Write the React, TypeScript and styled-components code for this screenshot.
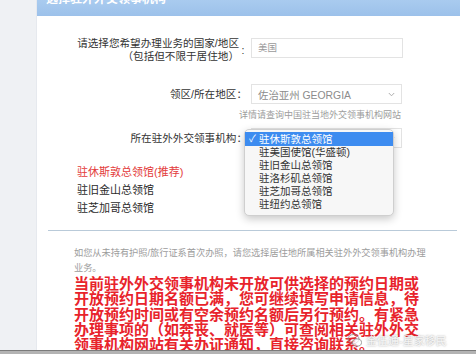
import styled, { createGlobalStyle } from "styled-components";

const GlobalStyle = createGlobalStyle`
  html, body {
    margin: 0;
    padding: 0;
    background: #ffffff;
  }
  body {
    font-family: "Liberation Sans", "Noto Sans CJK SC", sans-serif;
    color: #333333;
  }
`;

const Page = styled.div`
  width: 476px;
  height: 354px;
  overflow: hidden;
  display: flex;
  flex-direction: column;
  position: relative;
`;

const Main = styled.div`
  display: flex;
  height: 350px;
  overflow: hidden;
`;

const Sidebar = styled.div`
  width: 36px;
  flex-shrink: 0;
  background: #eff1f4;
`;

const Panel = styled.div`
  width: 424px;
  flex-shrink: 0;
  background: #ffffff;
  border-left: 1px solid #e6e9ee;
  box-sizing: border-box;
`;

const PanelHeader = styled.div`
  height: 16px;
  background: linear-gradient(#a9cbef, #9cc1ea);
  overflow: hidden;
  padding-left: 9px;
`;

const PanelTitle = styled.div`
  margin-top: -9px;
  line-height: 16px;
  font-size: 12px;
  font-weight: bold;
  color: #ffffff;
`;

const Form = styled.div`
  padding-top: 21px;
`;

const FormRow = styled.div<{ $top?: number }>`
  display: grid;
  grid-template-columns: 210px 152px;
  column-gap: 4px;
  margin-top: ${(p) => p.$top ?? 0}px;
  align-items: ${(p) => (p.$top ? "center" : "start")};
`;

const LabelCell = styled.div`
  display: flex;
  justify-content: flex-end;
  align-items: center;
  font-size: 10.6px;
  line-height: 13px;
  color: #333333;
  text-align: right;
`;

const LabelLines = styled.div`
  text-align: right;
`;

const Colon = styled.span`
  width: 8px;
  text-align: center;
`;

const FieldCell = styled.div`
  position: relative;
`;

const TextInput = styled.div`
  height: 20px;
  margin-top: 1px;
  box-sizing: border-box;
  border: 1px solid #e3e3e3;
  padding-left: 6px;
  font-size: 9.5px;
  line-height: 18px;
  color: #9a9a9a;
`;

const SelectBox = styled.div<{ $width?: number }>`
  width: ${(p) => p.$width ?? 151}px;
  height: 20px;
  box-sizing: border-box;
  border: 1px solid #e3e3e3;
  padding: 0 6px;
  display: flex;
  align-items: center;
  justify-content: space-between;
  font-size: 10.4px;
  color: #8c8c8c;
`;

const Chevron = () => (
  <svg width="7" height="5" viewBox="0 0 7 5">
    <path d="M0.8 1 L3.5 3.8 L6.2 1" fill="none" stroke="#a5a5a5" strokeWidth="0.9" />
  </svg>
);

const Hint = styled.div`
  width: 364px;
  margin-top: 5px;
  text-align: right;
  font-size: 9px;
  line-height: 12px;
  color: #9d9d9d;
`;

const Menu = styled.div`
  position: absolute;
  left: -7px;
  top: 1px;
  width: 150px;
  height: 87px;
  box-sizing: border-box;
  padding-top: 2px;
  background: #f7f7f7;
  border: 1px solid #cfcfcf;
  border-radius: 5px;
  box-shadow: 0 3px 9px rgba(0, 0, 0, 0.22);
  z-index: 2;
`;

const MenuItem = styled.div<{ $active?: boolean }>`
  position: relative;
  height: ${(p) => (p.$active ? 14 : 13)}px;
  line-height: ${(p) => (p.$active ? 14 : 13)}px;
  padding-left: 14px;
  font-size: 10.5px;
  background: ${(p) => (p.$active ? "#3d8cf0" : "transparent")};
  color: ${(p) => (p.$active ? "#ffffff" : "#333333")};
`;

const Check = styled.span`
  position: absolute;
  left: 4px;
  top: 0;
  font-size: 10px;
`;

const OfficeList = styled.div`
  margin-top: 15px;
  padding-left: 40px;
`;

const OfficeItem = styled.div<{ $recommended?: boolean }>`
  font-size: 11px;
  line-height: 18px;
  color: ${(p) => (p.$recommended ? "#e33b3b" : "#2b2b2b")};
`;

const Divider = styled.div`
  margin: 13px 3px 0 11px;
  height: 1px;
  background: #b9cad9;
`;

const Note = styled.div`
  margin-top: 15px;
  padding-left: 37px;
  width: 358px;
  font-size: 9.2px;
  line-height: 15px;
  color: #9c9c9c;
`;

const Warning = styled.div`
  padding-left: 37px;
  width: 352px;
  font-size: 15px;
  line-height: 15.3px;
  font-weight: bold;
  color: #e8232b;
`;

const BottomBar = styled.div`
  height: 4px;
  border-top: 1px solid #7b7b7b;
  background: #b3b3b3;
  box-sizing: border-box;
`;

const Watermark = styled.div`
  position: absolute;
  left: 347px;
  top: 332px;
  display: flex;
  align-items: center;
  gap: 3px;
  font-size: 11px;
  color: rgba(255, 255, 255, 0.85);
  text-shadow: 0 0 2px rgba(90, 90, 90, 0.6);
  z-index: 3;
`;

const WatermarkIcon = () => (
  <svg width="16" height="15" viewBox="0 0 16 15">
    <ellipse cx="6.5" cy="6" rx="5.5" ry="4.5" fill="none" stroke="rgba(140,140,140,0.8)" strokeWidth="1" />
    <ellipse cx="10" cy="9.5" rx="4.5" ry="3.6" fill="rgba(255,255,255,0.7)" stroke="rgba(140,140,140,0.8)" strokeWidth="1" />
  </svg>
);

const offices = ["驻美国使馆(华盛顿)", "驻旧金山总领馆", "驻洛杉矶总领馆", "驻芝加哥总领馆", "驻纽约总领馆"];

export default function App() {
  return (
    <Page>
      <GlobalStyle />
      <Main>
        <Sidebar />
        <Panel>
          <PanelHeader>
            <PanelTitle>选择驻外外交领事机构</PanelTitle>
          </PanelHeader>
          <Form>
            <FormRow>
              <LabelCell>
                <LabelLines>
                  请选择您希望办理业务的国家/地区
                  <br />
                  （包括但不限于居住地）
                </LabelLines>
                <Colon>:</Colon>
              </LabelCell>
              <FieldCell>
                <TextInput>美国</TextInput>
              </FieldCell>
            </FormRow>
            <FormRow $top={21}>
              <LabelCell>领区/所在地区：</LabelCell>
              <FieldCell>
                <SelectBox>
                  <span>佐治亚州 GEORGIA</span>
                  <Chevron />
                </SelectBox>
              </FieldCell>
            </FormRow>
            <Hint>详情请查询中国驻当地外交领事机构网站</Hint>
            <FormRow $top={7}>
              <LabelCell>所在驻外外交领事机构：</LabelCell>
              <FieldCell>
                <SelectBox>
                  <span>驻休斯敦总领馆</span>
                  <Chevron />
                </SelectBox>
                <Menu>
                  <MenuItem $active>
                    <Check>✓</Check>
                    驻休斯敦总领馆
                  </MenuItem>
                  {offices.map((o) => (
                    <MenuItem key={o}>{o}</MenuItem>
                  ))}
                </Menu>
              </FieldCell>
            </FormRow>
          </Form>
          <OfficeList>
            <OfficeItem $recommended>驻休斯敦总领馆(推荐)</OfficeItem>
            <OfficeItem>驻旧金山总领馆</OfficeItem>
            <OfficeItem>驻芝加哥总领馆</OfficeItem>
          </OfficeList>
          <Divider />
          <Note>如您从未持有护照/旅行证系首次办照，请您选择居住地所属相关驻外外交领事机构办理业务。</Note>
          <Warning>
            当前驻外外交领事机构未开放可供选择的预约日期或开放预约日期名额已满，您可继续填写申请信息，待开放预约时间或有空余预约名额后另行预约。有紧急办理事项的（如奔丧、就医等）可查阅相关驻外外交领事机构网站有关办证通知，直接咨询联系。
          </Warning>
        </Panel>
      </Main>
      <BottomBar />
      <Watermark>
        <WatermarkIcon />
        <span>金伍通-星家移民</span>
      </Watermark>
    </Page>
  );
}
